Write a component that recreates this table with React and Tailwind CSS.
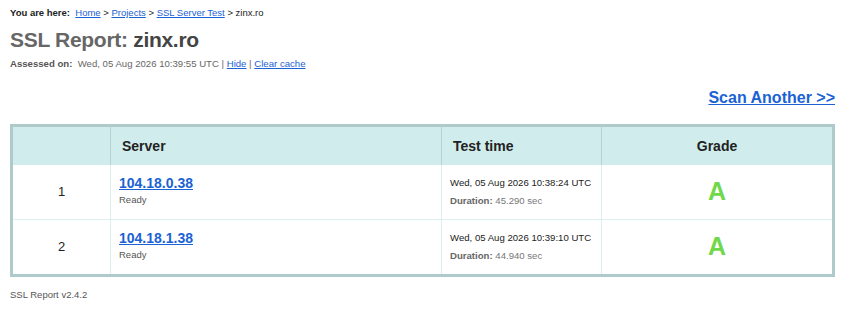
const rows = [
  { n: 1, ip: '104.18.0.38', time: 'Wed, 05 Aug 2026 10:38:24 UTC', dur: '45.290 sec' },
  { n: 2, ip: '104.18.1.38', time: 'Wed, 05 Aug 2026 10:39:10 UTC', dur: '44.940 sec' },
];

const link = 'text-[#1b62d4] underline';

export default function App() {
  return (
    <div className="w-[850px] h-[318px] bg-white pl-[10px] pr-[15px] pt-[7px] text-[#333] font-['Liberation_Sans',Arial,sans-serif]">
      {/* Breadcrumb */}
      <div className="text-[9.5px] leading-[12px] text-[#222]">
        <b>You are here:</b>&nbsp; <a className={link}>Home</a> &gt; <a className={link}>Projects</a> &gt;{' '}
        <a className={link}>SSL Server Test</a> &gt; zinx.ro
      </div>

      <h1 className="mt-[9px] text-[21px] leading-[24px] font-bold tracking-[-0.3px] text-[#666]">
        SSL Report: <span className="text-[#444]">zinx.ro</span>
      </h1>

      <div className="mt-[6px] text-[9.6px] leading-[12px] text-[#666]">
        <b className="text-[#555]">Assessed on:</b>&nbsp; Wed, 05 Aug 2026 10:39:55 UTC | <a className={link}>Hide</a> |{' '}
        <a className={link}>Clear cache</a>
      </div>

      <div className="mt-[19px] flex justify-end">
        <a className={`${link} text-[16px] leading-[18px] font-bold`}>Scan Another &gt;&gt;</a>
      </div>

      {/* Results table */}
      <div className="mt-[17px] w-[825px] border-[3px] border-[#aecaca]">
        <div className="grid grid-cols-[97px_331px_160px_1fr] h-[38px] bg-[#d1ecec] text-[14px] font-bold text-[#222]">
          <div />
          <div className="border-l border-[#b6d2d2] flex items-center pl-[11px]">Server</div>
          <div className="border-l border-[#b6d2d2] flex items-center pl-[11px]">Test time</div>
          <div className="border-l border-[#b6d2d2] flex items-center justify-center">Grade</div>
        </div>
        {rows.map((r, i) => (
          <div
            key={r.n}
            className={`grid grid-cols-[97px_331px_160px_1fr] ${i > 0 ? 'h-[55px] border-t border-[#dcefef]' : 'h-[54px]'}`}
          >
            <div className="flex items-center justify-center text-[13px] text-[#222]">{r.n}</div>
            <div className="border-l border-[#dcefef] pl-[8px] pt-[10px]">
              <a className={`${link} block text-[14px] leading-[16px] font-bold`}>{r.ip}</a>
              <div className="mt-[3px] text-[9.5px] leading-[11px] text-[#555]">Ready</div>
            </div>
            <div className="border-l border-[#dcefef] pl-[8px] pt-[12px] text-[9.6px] leading-[12px] whitespace-nowrap">
              <div className="text-[#222]">{r.time}</div>
              <div className="mt-[6px] text-[#777]">
                <b className="text-[#666]">Duration:</b> {r.dur}
              </div>
            </div>
            <div className="border-l border-[#dcefef] flex items-center justify-center text-[25px] font-bold text-[#6fd84b]">
              A
            </div>
          </div>
        ))}
      </div>

      <div className="mt-[12px] text-[9.5px] leading-[11px] text-[#555]">SSL Report v2.4.2</div>
    </div>
  );
}
